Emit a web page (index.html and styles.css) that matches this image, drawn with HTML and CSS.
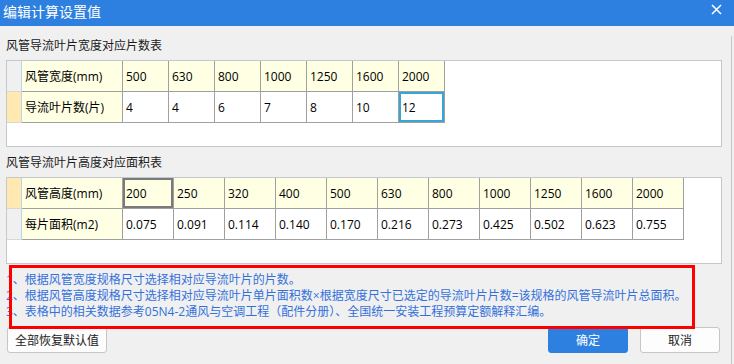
FILE: index.html
```html
<!DOCTYPE html>
<html lang="zh-CN">
<head>
  <meta charset="UTF-8">
  <meta name="viewport" content="width=device-width, initial-scale=1.0">
  <title>编辑计算设置值</title>
  <link rel="stylesheet" href="styles.css">
</head>
<body>

<div class="dialog">
  <!-- Title bar -->
  <div class="titlebar">
    <span class="title">编辑计算设置值</span>
    <button class="close-btn" title="关闭">
      <svg width="11" height="11" viewBox="0 0 11 11">
        <path d="M1 1 L10 10 M10 1 L1 10" stroke="#ffffff" stroke-width="1.5" fill="none"/>
      </svg>
    </button>
  </div>

  <div class="dialog-body">
    <div class="section-label">风管导流叶片宽度对应片数表</div>
    <div class="grid-panel">
      <div class="grid grid-width">
        <div class="cell row-head"></div>
        <div class="cell head">风管宽度(mm)</div>
        <div class="cell head">500</div>
        <div class="cell head">630</div>
        <div class="cell head">800</div>
        <div class="cell head">1000</div>
        <div class="cell head">1250</div>
        <div class="cell head">1600</div>
        <div class="cell head">2000</div>

        <div class="cell row-head current"></div>
        <div class="cell head">导流叶片数(片)</div>
        <div class="cell">4</div>
        <div class="cell">4</div>
        <div class="cell">6</div>
        <div class="cell">7</div>
        <div class="cell">8</div>
        <div class="cell">10</div>
        <div class="cell selected">12</div>
      </div>
    </div>

    <div class="section-label second">风管导流叶片高度对应面积表</div>
    <div class="grid-panel">
      <div class="grid grid-height">
        <div class="cell row-head current"></div>
        <div class="cell head">风管高度(mm)</div>
        <div class="cell head focused">200</div>
        <div class="cell head">250</div>
        <div class="cell head">320</div>
        <div class="cell head">400</div>
        <div class="cell head">500</div>
        <div class="cell head">630</div>
        <div class="cell head">800</div>
        <div class="cell head">1000</div>
        <div class="cell head">1250</div>
        <div class="cell head">1600</div>
        <div class="cell head">2000</div>

        <div class="cell row-head"></div>
        <div class="cell head">每片面积(m2)</div>
        <div class="cell">0.075</div>
        <div class="cell">0.091</div>
        <div class="cell">0.114</div>
        <div class="cell">0.140</div>
        <div class="cell">0.170</div>
        <div class="cell">0.216</div>
        <div class="cell">0.273</div>
        <div class="cell">0.425</div>
        <div class="cell">0.502</div>
        <div class="cell">0.623</div>
        <div class="cell">0.755</div>
      </div>
    </div>

    <div class="notes">
      <p>1、根据风管宽度规格尺寸选择相对应导流叶片的片数。</p>
      <p>2、根据风管高度规格尺寸选择相对应导流叶片单片面积数×根据宽度尺寸已选定的导流叶片片数=该规格的风管导流叶片总面积。</p>
      <p>3、表格中的相关数据参考05N4-2通风与空调工程（配件分册）、全国统一安装工程预算定额解释汇编。</p>
      <div class="notes-mark"></div>
    </div>

    <div class="actions">
      <button class="btn">全部恢复默认值</button>
      <div class="actions-right">
        <button class="btn btn-primary">确定</button>
        <button class="btn">取消</button>
      </div>
    </div>
  </div>
</div>

</body>
</html>
```

FILE: styles.css
```css
body {
  margin: 0;
  padding: 0;
  font-family: "Open Sans", "Noto Sans CJK SC", sans-serif;
  font-size: 12px;
  color: #000000;
  background-color: #f0f0f0;
}

.dialog {
  width: 734px;
  height: 364px;
  overflow: hidden;
  background-color: #f0f0f0;
}

.titlebar {
  height: 26px;
  background-color: #2d7fe0;
  display: flex;
  align-items: center;
  justify-content: space-between;
}

.title {
  color: #ffffff;
  font-size: 14px;
  padding-left: 3px;
  line-height: 24px;
  margin-top: -2px;
}

.close-btn {
  border: none;
  background: none;
  padding: 0;
  margin-right: 12px;
  margin-top: -8px;
  width: 11px;
  height: 11px;
  display: flex;
}

.dialog-body {
  width: 732px;
  height: 338px;
  border-right: 1px solid #c8c8c8;
  padding: 0 0 0 6px;
  box-sizing: border-box;
}

.section-label {
  line-height: 20px;
  margin-top: 10px;
  margin-bottom: 4px;
  color: #1a1a1a;
}

.section-label.second {
  margin-top: 6px;
}

.grid-panel {
  width: 716px;
  height: 87px;
  box-sizing: border-box;
  background-color: #ffffff;
  border: 1px solid #c4c8cc;
}

.grid {
  display: grid;
  grid-auto-rows: 31px;
}

.grid-width {
  grid-template-columns: 15px 101px repeat(7, 46px);
}

.grid-height {
  grid-template-columns: 15px 101px repeat(11, 51px);
}

.cell {
  box-sizing: border-box;
  border-right: 1px solid #a0a0a0;
  border-bottom: 1px solid #a0a0a0;
  padding-left: 3px;
  display: flex;
  align-items: center;
  white-space: nowrap;
  background-color: #ffffff;
}

.cell.head {
  background-color: #ffffe4;
}

.cell.row-head {
  background-color: #f0f0f0;
  border-right: 1px solid #bcd2ea;
  border-bottom: 1px solid #d8d8d8;
}

.cell.row-head.current {
  background-color: #ffe9b1;
}

.cell.focused {
  box-shadow: inset 0 0 0 2px #7a7a7a;
}

.cell.selected {
  box-shadow: inset 0 0 0 2px #36a6d8;
}

.notes {
  position: relative;
  margin-top: 8px;
  margin-left: -6px;
  padding-left: 6px;
  color: #3370dc;
}

.notes p {
  margin: 0;
  line-height: 16px;
  white-space: nowrap;
}

/* red annotation frame drawn over the notes */
.notes-mark {
  position: absolute;
  left: 9px;
  top: -7px;
  width: 686px;
  height: 64px;
  box-sizing: border-box;
  border: 3px solid #ff0000;
}

.actions {
  display: flex;
  justify-content: space-between;
  margin-top: 7px;
  padding-right: 11px;
  margin-left: 1px;
}

.actions-right {
  display: flex;
  gap: 12px;
}

.btn {
  font-family: "Open Sans", "Noto Sans CJK SC", sans-serif;
  font-size: 12px;
  height: 26px;
  width: 80px;
  padding: 0;
  background-color: #fdfdfd;
  border: 1px solid #c6c6c6;
  border-radius: 3px;
  color: #222222;
}

.actions > .btn {
  width: 100px;
}

.btn-primary {
  background-color: #2e80e0;
  border-color: #2e80e0;
  color: #ffffff;
}
```
